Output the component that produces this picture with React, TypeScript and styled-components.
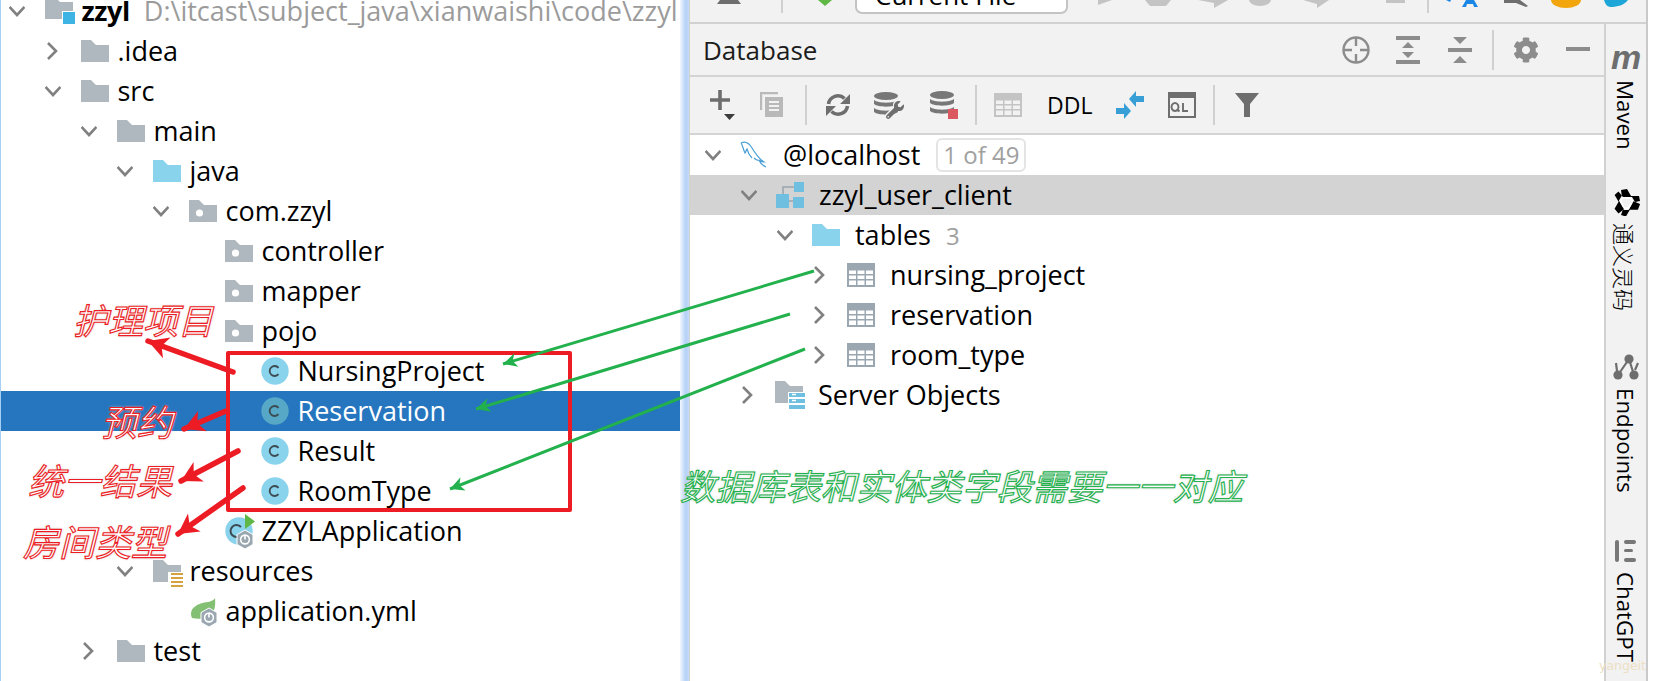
import React from "react";
import styled, { createGlobalStyle } from "styled-components";
import { FaCog, FaWrench } from "react-icons/fa";

const GlobalStyle = createGlobalStyle`
  html, body { margin: 0; padding: 0; background: #fff; }
  body { font-family: "Open Sans", "Noto Sans CJK SC", sans-serif; }
`;

const Page = styled.div`
  position: relative;
  display: flex;
  width: 1653px;
  height: 681px;
  overflow: hidden;
  background: #fff;
  color: #000;
  font-size: 27px;
`;

const LeftPanel = styled.div`
  width: 679px;
  height: 100%;
  overflow: hidden;
  border-left: 1px solid #a6cff5;
  flex: none;
`;

const Tree = styled.div`
  margin-top: -9px;
`;

const Row = styled.div<{ $pad: number; $selected?: boolean; $greyed?: boolean }>`
  display: flex;
  align-items: center;
  height: 40px;
  padding-left: ${(p) => p.$pad}px;
  white-space: nowrap;
  background: ${(p) => (p.$selected ? "#2675bf" : p.$greyed ? "#d3d3d3" : "transparent")};
  color: ${(p) => (p.$selected ? "#fff" : "#000")};
`;

const ChevronSlot = styled.span<{ $w: number }>`
  display: flex;
  flex: none;
  width: ${(p) => p.$w}px;
`;

const IconSlot = styled.span<{ $w: number }>`
  display: flex;
  flex: none;
  width: ${(p) => p.$w}px;
`;

const Label = styled.span`
  padding-bottom: 2px;
`;

const Bold = styled.span`
  font-weight: 700;
  letter-spacing: -0.4px;
`;

const PathHint = styled.span`
  margin-left: 14px;
  color: #9b9b9b;
`;

const Divider = styled.div`
  width: 9px;
  flex: none;
  background: linear-gradient(90deg, #f2f6fd, #b4d1f7 65%, #c6dbf9);
`;

const RightArea = styled.div`
  display: flex;
  flex-direction: column;
  width: 956px;
  flex: none;
  border-right: 2px solid #c9c9c9;
  border-left: 1px solid #d1d1d1;
`;

const TopBar = styled.div`
  display: flex;
  height: 22px;
  flex: none;
  overflow: hidden;
  background: #f2f2f2;
  border-bottom: 2px solid #d1d1d1;
`;

const BarIcon = styled.svg<{ $ml: number }>`
  flex: none;
  height: 22px;
  margin-left: ${(p) => p.$ml}px;
`;

const RunConfig = styled.div`
  flex: none;
  align-self: flex-end;
  box-sizing: border-box;
  width: 213px;
  height: 40px;
  margin: 0 0 8px 23px;
  padding-left: 18px;
  line-height: 38px;
  font-size: 26px;
  background: #fff;
  border: 2px solid #c4c4c4;
  border-radius: 7px;
`;

const Workspace = styled.div`
  display: flex;
  flex: 1;
  min-height: 0;
`;

const DbPanel = styled.div`
  display: flex;
  flex-direction: column;
  width: 914px;
  flex: none;
`;

const DbHeader = styled.div`
  display: flex;
  align-items: center;
  height: 51px;
  padding-left: 13px;
  flex: none;
  background: #f2f2f2;
  border-bottom: 2px solid #d4d4d4;
  font-size: 26px;
  color: #1c1c1c;
`;

const HeaderTitle = styled.span`
  flex: 1;
`;

const HeaderTool = styled.span<{ $w: number }>`
  display: flex;
  justify-content: center;
  align-items: center;
  flex: none;
  width: ${(p) => p.$w}px;
  color: #8c8c8c;
`;

const VSep = styled.span<{ $h: number; $ml: number; $mr: number }>`
  flex: none;
  width: 2px;
  height: ${(p) => p.$h}px;
  margin: 0 ${(p) => p.$mr}px 0 ${(p) => p.$ml}px;
  background: #d0d0d0;
`;

const DbToolbar = styled.div`
  display: flex;
  align-items: center;
  height: 56px;
  padding-left: 20px;
  flex: none;
  background: #f2f2f2;
  border-bottom: 2px solid #d4d4d4;
`;

const Tool = styled.span<{ $ml: number }>`
  display: flex;
  flex: none;
  margin-left: ${(p) => p.$ml}px;
  color: #6e6e6e;
`;

const DdlText = styled.span`
  flex: none;
  margin-left: 25px;
  font-size: 23px;
  line-height: 1;
  font-family: "Open Sans", sans-serif;
`;

const DbTree = styled.div`
  flex: 1;
  background: #fff;
`;

const Badge = styled.span`
  margin-left: 16px;
  padding: 0 5px;
  height: 30px;
  line-height: 30px;
  border: 2px solid #e4e4e4;
  border-radius: 6px;
  font-size: 24px;
  color: #a0a0a0;
`;

const Count = styled.span`
  margin-left: 15px;
  font-size: 24px;
  color: #a0a0a0;
`;

const SideBar = styled.div`
  flex: 1;
  display: flex;
  flex-direction: column;
  align-items: center;
  padding-top: 24px;
  background: #f2f2f2;
  border-left: 2px solid #d1d1d1;
`;

const SideTool = styled.div<{ $h: number }>`
  display: flex;
  flex-direction: column;
  align-items: center;
  flex: none;
  height: ${(p) => p.$h}px;
`;

const SideIcon = styled.div<{ $mb: number }>`
  display: flex;
  justify-content: center;
  align-items: flex-start;
  flex: none;
  margin-bottom: ${(p) => p.$mb}px;
`;

const MavenMark = styled.span`
  font-family: "Liberation Sans", sans-serif;
  font-weight: 700;
  font-style: italic;
  font-size: 34px;
  line-height: 18px;
  height: 18px;
  color: #6e6e6e;
`;

const SideLabel = styled.span`
  writing-mode: vertical-rl;
  margin-right: 3px;
  font-size: 22.3px;
  line-height: 30px;
  white-space: nowrap;
`;

const CjkSideLabel = styled(SideLabel)`
  font-family: "Noto Sans CJK SC", sans-serif;
  font-weight: 300;
  font-size: 22px;
  text-orientation: sideways;
`;

const Watermark = styled.div`
  position: absolute;
  left: 1599px;
  top: 656px;
  font-family: "DejaVu Sans", sans-serif;
  font-size: 12.5px;
  line-height: 20px;
  color: #ecdfc4;
`;

const Annotations = styled.svg`
  position: absolute;
  left: 0;
  top: 0;
  pointer-events: none;
`;

const RedBox = styled.div`
  position: absolute;
  left: 226px;
  top: 351px;
  width: 338px;
  height: 153px;
  border: 4px solid #ed1c24;
  border-radius: 2px;
`;

const Note = styled.div<{ $x: number; $y: number; $size: number; $green?: boolean }>`
  position: absolute;
  left: ${(p) => p.$x}px;
  top: ${(p) => p.$y}px;
  font-family: "Noto Sans CJK SC", sans-serif;
  font-weight: 400;
  font-style: italic;
  font-size: ${(p) => p.$size}px;
  line-height: 1;
  white-space: nowrap;
  color: #fff;
  -webkit-text-stroke: 1.1px ${(p) => (p.$green ? "#22b14c" : "#ed1c24")};
  text-shadow: 0 0 3px #c4c4c4;
`;

const WrenchBox = styled.span`
  position: relative;
  display: flex;
  width: 30px;
  height: 27px;
`;

const WrenchOver = styled.span`
  position: absolute;
  right: 0;
  bottom: 0;
  display: flex;
  color: #6e6e6e;
  filter: drop-shadow(-1px -1px 0 #f2f2f2);
`;

/* ---- icons ---- */

const Chevron = ({ open }: { open?: boolean }) => (
  <svg width="16" height="18" viewBox="0 0 16 18" fill="none" stroke="#808080" strokeWidth="2.6">
    {open ? <path d="M0.5 5l7.5 8 7.5-8" /> : <path d="M3 1l8 8-8 8" />}
  </svg>
);

const FOLDER = "M0 0h10l5 5h13v17H0z";

const Folder = ({ color = "#afb8bf" }: { color?: string }) => (
  <svg width="28" height="22" viewBox="0 0 28 22">
    <path d={FOLDER} fill={color} />
  </svg>
);

const PackageFolder = () => (
  <svg width="28" height="22" viewBox="0 0 28 22">
    <path d={FOLDER} fill="#afb8bf" />
    <circle cx="10.5" cy="13" r="3.6" fill="#fff" />
  </svg>
);

const ModuleFolder = () => (
  <svg width="30" height="28" viewBox="0 0 30 28" style={{ overflow: "visible" }}>
    <path d={FOLDER} fill="#afb8bf" />
    <rect x="17" y="14" width="15" height="15" fill="#fff" />
    <rect x="18" y="15" width="12" height="12" fill="#3db4e4" />
  </svg>
);

const ResourcesFolder = () => (
  <svg width="28" height="22" viewBox="0 0 28 22" style={{ overflow: "visible" }}>
    <path d={FOLDER} fill="#afb8bf" />
    <rect x="15" y="12" width="17" height="18" fill="#fff" />
    <path d="M18 14h12M18 18h12M18 22h12M18 26h12" stroke="#d4a33f" strokeWidth="2.2" />
  </svg>
);

const ClassIcon = ({ selected }: { selected?: boolean }) => (
  <svg width="28" height="28" viewBox="0 0 28 28">
    <circle cx="14" cy="14" r="13.7" fill={selected ? "#56a8c6" : "#8ad3ed"} />
    <path d="M17.500 10.800a5 5 0 1 0 0 6.400" fill="none" stroke="#3c4a52" strokeWidth="1.800" />
  </svg>
);

const BootHex = ({ x, y }: { x: number; y: number }) => (
  <g transform={`translate(${x} ${y})`}>
    <path d="M8 0l8 4.6v9.8l-8 4.6-8-4.6V4.6z" fill="#9aa7b0" stroke="#fff" strokeWidth="1" />
    <circle cx="8" cy="9.5" r="4.4" fill="none" stroke="#fff" strokeWidth="1.6" />
    <path d="M8 5v4.5" stroke="#fff" strokeWidth="1.6" />
  </g>
);

const AppIcon = () => (
  <svg width="30" height="34" viewBox="0 0 30 34" style={{ overflow: "visible" }}>
    <circle cx="14" cy="17" r="13.7" fill="#8ad3ed" />
    <path d="M16 13a6 6 0 1 0 0 8" fill="none" stroke="#3c4a52" strokeWidth="2" />
    <path d="M20 0l10 7.5-10 7.5z" fill="#5fb846" />
    <BootHex x={12} y={16} />
  </svg>
);

const SpringFile = () => (
  <svg width="30" height="30" viewBox="0 0 30 30" style={{ overflow: "visible" }}>
    <path d="M3 22C-1 12 9 7 19 6c3-.5 6-2 7-4 1 9-1 18-9 20-5 1.200-10 1-14 0z" fill="#84c074" />
    <BootHex x={12} y={12} />
  </svg>
);

const Dolphin = () => (
  <svg width="28" height="28" viewBox="0 0 28 28" fill="none" stroke="#4a9fd6" strokeWidth="1.2">
    <path d="M1 2c4-2 8 0 11 5 3 5 6 10 12 14-2 0-4-1-5-2 1 3 3 5 7 7" />
    <path d="M19 19c-2 1-4-1-5-2M1 2c2 3 2 6 4 10 1-1 1-3 2-4 1 4 3 7 5 9" />
  </svg>
);

const SchemaIcon = () => (
  <svg width="28" height="26" viewBox="0 0 28 26">
    <path d="M7 12V5h12M19 19H9" fill="none" stroke="#9aa7b0" strokeWidth="1.6" />
    <rect x="18" y="0" width="10" height="10" fill="#6fbfe0" />
    <rect x="0" y="12" width="13" height="14" fill="#6fbfe0" />
    <rect x="17" y="15" width="11" height="11" fill="#6fbfe0" />
  </svg>
);

const GRID_CELLS =
  "M2 7.500h7v3.500H2zM10.500 7.500h7v3.500h-7zM19 7.500h7v3.500h-7zM2 12.500h7V16H2zM10.500 12.500h7V16h-7zM19 12.500h7V16h-7zM2 17.500h7V22H2zM10.500 17.500h7V22h-7zM19 17.500h7V22h-7z";

const TableIcon = () => (
  <svg width="28" height="24" viewBox="0 0 28 24">
    <rect width="28" height="24" fill="#9aa7b0" />
    <path d={GRID_CELLS} fill="#fff" />
  </svg>
);

const ServerObjects = () => (
  <svg width="30" height="28" viewBox="0 0 30 28" style={{ overflow: "visible" }}>
    <path d={FOLDER} fill="#afb8bf" />
    <rect x="13" y="11" width="18" height="18" fill="#fff" />
    <path d="M14 12h16v4H14zM14 18h16v4H14zM14 24h16v4H14z" fill="#6fbfe0" />
    <path d="M17 13.500h4M17 19.500h4" stroke="#fff" strokeWidth="1.400" />
  </svg>
);

const PlusIcon = () => (
  <svg width="30" height="34" viewBox="0 0 30 34">
    <path d="M10 2v20M0 12h20" stroke="#6e6e6e" strokeWidth="3.6" />
    <path d="M14 26h11l-5.500 6z" fill="#3c3c3c" />
  </svg>
);

const CopyIcon = () => (
  <svg width="24" height="26" viewBox="0 0 24 26" fill="none" stroke="#b9b9b9" strokeWidth="2.400">
    <path d="M18 1H1v17" />
    <path d="M5 5h18v20H5z" fill="#b9b9b9" stroke="none" />
    <path d="M9 10h10M9 14h10M9 18h10" stroke="#f2f2f2" strokeWidth="1.800" />
  </svg>
);

const RefreshIcon = () => (
  <svg width="24" height="24" viewBox="0 0 24 24">
    <path d="M2.500 11A9.500 9.500 0 0 1 18.500 5.500M21.500 13A9.500 9.500 0 0 1 5.500 18.500" fill="none" stroke="#6e6e6e" strokeWidth="3.600" />
    <path d="M24 1v10H14zM0 23V13h10z" fill="#6e6e6e" />
  </svg>
);

const DbStack = ({ w = 28 }: { w?: number }) => (
  <g fill="#777">
    <ellipse cx={w / 2} cy="4" rx={w / 2} ry="4" />
    <path d={`M0 8c4 3.500 ${w - 4} 3.500 ${w} 0v4c-4 3.500-${w - 4} 3.500-${w} 0z`} />
    <path d={`M0 16c4 3.500 ${w - 4} 3.500 ${w} 0v4c-4 3.500-${w - 4} 3.500-${w} 0z`} />
  </g>
);

const DbWrench = () => (
  <WrenchBox>
    <svg width="24" height="27" viewBox="0 0 24 27">
      <DbStack w={24} />
    </svg>
    <WrenchOver>
      <FaWrench size={18} />
    </WrenchOver>
  </WrenchBox>
);

const DbStop = () => (
  <svg width="28" height="28" viewBox="0 0 28 28">
    <DbStack w={24} />
    <rect x="18" y="18" width="10" height="10" fill="#db5860" />
  </svg>
);

const GridIcon = () => (
  <svg width="28" height="24" viewBox="0 0 28 24">
    <rect width="28" height="24" fill="#c4c4c4" />
    <path d={GRID_CELLS} fill="#f2f2f2" />
  </svg>
);

const CompareIcon = () => (
  <svg width="28" height="28" viewBox="0 0 28 28" fill="#389fd6">
    <path d="M13 8l7-8v5h8v6h-8v5z" />
    <path d="M15 20l-7 8v-5H0v-6h8v-5z" />
  </svg>
);

const QlIcon = () => (
  <svg width="28" height="26" viewBox="0 0 28 26">
    <rect x="1" y="1" width="26" height="24" fill="none" stroke="#6e6e6e" strokeWidth="2" />
    <rect x="1" y="1" width="26" height="5" fill="#6e6e6e" />
    <path d="M7 11a3.500 4 0 1 0 .01 0zM9.500 17.500l2 2M15 11v8h5" fill="none" stroke="#6e6e6e" strokeWidth="1.900" />
  </svg>
);

const Funnel = () => (
  <svg width="24" height="24" viewBox="0 0 24 24">
    <path d="M0 0h24l-9 11v13H9V11z" fill="#6e6e6e" />
  </svg>
);

const LocateIcon = () => (
  <svg width="28" height="28" viewBox="0 0 28 28" fill="none" stroke="#8c8c8c" strokeWidth="2.400">
    <circle cx="14" cy="14" r="12.500" />
    <path d="M14 1v9M14 18v9M1 14h9M18 14h9" />
  </svg>
);

const ExpandIcon = () => (
  <svg width="24" height="28" viewBox="0 0 24 28" fill="#8c8c8c">
    <path d="M0 0h24v4H0zM0 24h24v4H0zM12 6l6 6H6zM12 22l-6-6h12z" />
  </svg>
);

const CollapseIcon = () => (
  <svg width="24" height="26" viewBox="0 0 24 26" fill="#8c8c8c">
    <path d="M0 11h24v4H0zM5 0h14l-7 7zM12 19l7 7H5z" />
  </svg>
);

const MinusIcon = () => (
  <svg width="24" height="5" viewBox="0 0 24 5">
    <rect width="24" height="4" fill="#8c8c8c" />
  </svg>
);

const TongyiIcon = () => (
  <svg width="27" height="27" viewBox="0 0 27 27">
    {[0, 120, 240].map((deg) => (
      <g key={deg} transform={`rotate(${deg} 13.500 13.500)`}>
        <path d="M8 1l6-1 4 7h8l1 5-5 1-3-5H9z" fill="#000" />
        <path d="M11 8h7l3 5-2 1-2-4h-5z" fill="#fff" />
      </g>
    ))}
  </svg>
);

const EndpointsIcon = () => (
  <svg width="26" height="26" viewBox="0 0 26 26" fill="#6e6e6e">
    <circle cx="16" cy="5" r="4.600" />
    <circle cx="5" cy="21" r="4.600" />
    <circle cx="21" cy="21" r="4.600" />
    <path d="M16 5L5 21M16 5l5 16M3 9l1 8M25 9l-3 7" stroke="#6e6e6e" strokeWidth="2.200" />
  </svg>
);

const ChatIcon = () => (
  <svg width="22" height="22" viewBox="0 0 22 22" fill="#777">
    <rect x="0" y="0" width="4" height="22" rx="2" />
    <rect x="9" y="0" width="12" height="4" rx="2" />
    <rect x="9" y="9" width="9" height="3" rx="1.500" />
    <rect x="9" y="18" width="12" height="4" rx="2" />
  </svg>
);

/* ---- data ---- */

type Item = { depth: number; chevron?: "open" | "closed"; icon: React.ReactNode; label: React.ReactNode; selected?: boolean };

const projectRows: Item[] = [
  { depth: 0, chevron: "open", icon: <ModuleFolder />, label: <><Bold>zzyl</Bold><PathHint>D:\itcast\subject_java\xianwaishi\code\zzyl</PathHint></> },
  { depth: 1, chevron: "closed", icon: <Folder />, label: ".idea" },
  { depth: 1, chevron: "open", icon: <Folder />, label: "src" },
  { depth: 2, chevron: "open", icon: <Folder />, label: "main" },
  { depth: 3, chevron: "open", icon: <Folder color="#8ad3ed" />, label: "java" },
  { depth: 4, chevron: "open", icon: <PackageFolder />, label: "com.zzyl" },
  { depth: 5, icon: <PackageFolder />, label: "controller" },
  { depth: 5, icon: <PackageFolder />, label: "mapper" },
  { depth: 5, icon: <PackageFolder />, label: "pojo" },
  { depth: 6, icon: <ClassIcon />, label: "NursingProject" },
  { depth: 6, icon: <ClassIcon selected />, label: "Reservation", selected: true },
  { depth: 6, icon: <ClassIcon />, label: "Result" },
  { depth: 6, icon: <ClassIcon />, label: "RoomType" },
  { depth: 5, icon: <AppIcon />, label: "ZZYLApplication" },
  { depth: 3, chevron: "open", icon: <ResourcesFolder />, label: "resources" },
  { depth: 4, icon: <SpringFile />, label: "application.yml" },
  { depth: 2, chevron: "closed", icon: <Folder />, label: "test" },
];

const dbRows: { pad: number; chevron: "open" | "closed"; icon: React.ReactNode; label: string; extra?: React.ReactNode; greyed?: boolean }[] = [
  { pad: 15, chevron: "open", icon: <Dolphin />, label: "@localhost", extra: <Badge>1 of 49</Badge> },
  { pad: 51, chevron: "open", icon: <SchemaIcon />, label: "zzyl_user_client", greyed: true },
  { pad: 87, chevron: "open", icon: <Folder color="#8ad3ed" />, label: "tables", extra: <Count>3</Count> },
  { pad: 122, chevron: "closed", icon: <TableIcon />, label: "nursing_project" },
  { pad: 122, chevron: "closed", icon: <TableIcon />, label: "reservation" },
  { pad: 122, chevron: "closed", icon: <TableIcon />, label: "room_type" },
  { pad: 50, chevron: "closed", icon: <ServerObjects />, label: "Server Objects" },
];

const redArrows = [
  { x1: 233, y1: 372, x2: 148, y2: 341 },
  { x1: 226, y1: 411, x2: 184, y2: 429 },
  { x1: 238, y1: 451, x2: 181, y2: 481 },
  { x1: 243, y1: 488, x2: 178, y2: 534 },
];

const greenArrows = [
  { x1: 814, y1: 271, x2: 503, y2: 364 },
  { x1: 790, y1: 314, x2: 476, y2: 409 },
  { x1: 805, y1: 349, x2: 450, y2: 489 },
];

// barbed head: the tip, two swept-back barbs and a notch on the shaft
const arrowHead = (a: { x1: number; y1: number; x2: number; y2: number }, len: number, half: number) => {
  const d = Math.hypot(a.x1 - a.x2, a.y1 - a.y2);
  const ux = (a.x1 - a.x2) / d;
  const uy = (a.y1 - a.y2) / d;
  const bx = a.x2 + ux * len;
  const by = a.y2 + uy * len;
  const nx = a.x2 + ux * len * 0.72;
  const ny = a.y2 + uy * len * 0.72;
  return `${a.x2},${a.y2} ${bx - uy * half},${by + ux * half} ${nx},${ny} ${bx + uy * half},${by - ux * half}`;
};

const App = () => {
  return (
    <Page>
      <GlobalStyle />
      <LeftPanel>
        <Tree>
          {projectRows.map((r, i) => (
            <Row key={i} $pad={8 + 36 * r.depth} $selected={r.selected}>
              <ChevronSlot $w={36}>{r.chevron && <Chevron open={r.chevron === "open"} />}</ChevronSlot>
              <IconSlot $w={36.5}>{r.icon}</IconSlot>
              <Label>{r.label}</Label>
            </Row>
          ))}
          <Row $pad={92}>
            <svg width="14" height="36" viewBox="0 0 14 36">
              <path d="M0 8h12v28H0z" fill="#afb8bf" />
            </svg>
          </Row>
        </Tree>
      </LeftPanel>
      <Divider />
      <RightArea>
        <TopBar>
          <BarIcon $ml={26} width="26" viewBox="0 0 26 22"><path d="M4 0h18l3 4H1z" fill="#6e6e6e" /></BarIcon>
          <BarIcon $ml={39} width="2" viewBox="0 0 2 22"><rect width="2" height="13" fill="#d0d0d0" /></BarIcon>
          <BarIcon $ml={35} width="14" viewBox="0 0 14 22"><path d="M0 0h14L7 6z" fill="#5fb846" /></BarIcon>
          <RunConfig>Current File</RunConfig>
          <BarIcon $ml={30} width="14" viewBox="0 0 14 22"><path d="M0 0h14L0 5z" fill="#c4c4c4" /></BarIcon>
          <BarIcon $ml={33} width="26" viewBox="0 0 26 22"><path d="M0 0h26l-5 6H5z" fill="#c4c4c4" /></BarIcon>
          <BarIcon $ml={27} width="30" viewBox="0 0 30 22"><path d="M0 0h30L16 8V3z" fill="#c4c4c4" /></BarIcon>
          <BarIcon $ml={21} width="22" viewBox="0 0 22 22"><path d="M0 0h22a11 6 0 0 1-22 0z" fill="#c4c4c4" /></BarIcon>
          <BarIcon $ml={32} width="26" viewBox="0 0 26 22"><path d="M0 0h26L14 8V4z" fill="#c4c4c4" /></BarIcon>
          <BarIcon $ml={57} width="19" viewBox="0 0 19 22"><rect width="19" height="3" fill="#c4c4c4" /></BarIcon>
          <BarIcon $ml={22} width="2" viewBox="0 0 2 22"><rect width="2" height="13" fill="#d0d0d0" /></BarIcon>
          <BarIcon $ml={16} width="33" viewBox="0 0 33 22">
            <path d="M1 0l4 2 1-2zM17 7l4-7h8l4 7h-4l-1-3h-6l-1 3z" fill="#1a87e6" />
          </BarIcon>
          <BarIcon $ml={26} width="24" viewBox="0 0 24 22"><path d="M0 0h16l8 6-2 1L12 3H0z" fill="#6e6e6e" /></BarIcon>
          <BarIcon $ml={23} width="30" viewBox="0 0 30 22"><path d="M0 0h30a15 8 0 0 1-30 0z" fill="#f2a50c" /></BarIcon>
          <BarIcon $ml={23} width="24" viewBox="0 0 24 22"><path d="M0 0h24C20 5 14 7 6 7 2 6 1 3 0 0z" fill="#1fa6d8" /></BarIcon>
        </TopBar>
        <Workspace>
          <DbPanel>
            <DbHeader>
              <HeaderTitle>Database</HeaderTitle>
              <HeaderTool $w={52}><LocateIcon /></HeaderTool>
              <HeaderTool $w={52}><ExpandIcon /></HeaderTool>
              <HeaderTool $w={52}><CollapseIcon /></HeaderTool>
              <VSep $h={40} $ml={6} $mr={6} />
              <HeaderTool $w={52}><FaCog size={26} /></HeaderTool>
              <HeaderTool $w={52}><MinusIcon /></HeaderTool>
            </DbHeader>
            <DbToolbar>
              <PlusIcon />
              <Tool $ml={20}><CopyIcon /></Tool>
              <VSep $h={40} $ml={21} $mr={0} />
              <Tool $ml={19}><RefreshIcon /></Tool>
              <Tool $ml={24}><DbWrench /></Tool>
              <Tool $ml={26}><DbStop /></Tool>
              <VSep $h={40} $ml={17} $mr={0} />
              <Tool $ml={17}><GridIcon /></Tool>
              <DdlText>DDL</DdlText>
              <Tool $ml={24}><CompareIcon /></Tool>
              <Tool $ml={24}><QlIcon /></Tool>
              <VSep $h={40} $ml={17} $mr={0} />
              <Tool $ml={20}><Funnel /></Tool>
            </DbToolbar>
            <DbTree>
              {dbRows.map((r, i) => (
                <Row key={i} $pad={r.pad} $greyed={r.greyed}>
                  <ChevronSlot $w={35}><Chevron open={r.chevron === "open"} /></ChevronSlot>
                  <IconSlot $w={43}>{r.icon}</IconSlot>
                  <Label>{r.label}</Label>
                  {r.extra}
                </Row>
              ))}
            </DbTree>
          </DbPanel>
          <SideBar>
            <SideTool $h={141}>
              <SideIcon $mb={14}><MavenMark>m</MavenMark></SideIcon>
              <SideLabel>Maven</SideLabel>
            </SideTool>
            <SideTool $h={165}>
              <SideIcon $mb={7}><TongyiIcon /></SideIcon>
              <CjkSideLabel>通义灵码</CjkSideLabel>
            </SideTool>
            <SideTool $h={186}>
              <SideIcon $mb={8}><EndpointsIcon /></SideIcon>
              <SideLabel>Endpoints</SideLabel>
            </SideTool>
            <SideTool $h={130}>
              <SideIcon $mb={10}><ChatIcon /></SideIcon>
              <SideLabel>ChatGPT</SideLabel>
            </SideTool>
          </SideBar>
        </Workspace>
      </RightArea>

      <RedBox />
      <Annotations width="1653" height="681" viewBox="0 0 1653 681">
        {redArrows.map((a, i) => (
          <g key={i}>
            <line x1={a.x1} y1={a.y1} x2={a.x2} y2={a.y2} stroke="#ed1c24" strokeWidth="5.500" strokeLinecap="round" />
            <polygon points={arrowHead(a, 20, 11)} fill="#ed1c24" />
          </g>
        ))}
        {greenArrows.map((a, i) => (
          <g key={i}>
            <line x1={a.x1} y1={a.y1} x2={a.x2} y2={a.y2} stroke="#22b14c" strokeWidth="3" />
            <polygon points={arrowHead(a, 14, 7)} fill="#22b14c" />
          </g>
        ))}
      </Annotations>
      <Note $x={73} $y={301} $size={35}>护理项目</Note>
      <Note $x={101} $y={402} $size={36}>预约</Note>
      <Note $x={28} $y={461} $size={36}>统一结果</Note>
      <Note $x={23} $y={522} $size={36}>房间类型</Note>
      <Note $x={680} $y={467} $size={35.200} $green>数据库表和实体类字段需要一一对应</Note>
      <Watermark>yangeit</Watermark>
    </Page>
  );
};

export default App;
